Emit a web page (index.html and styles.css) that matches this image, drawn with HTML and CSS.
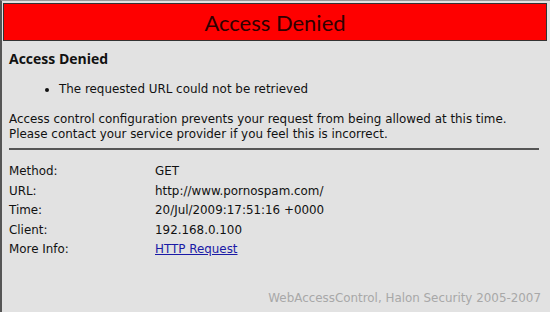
FILE: index.html
```html
<!DOCTYPE html>
<html>
<head>
<meta charset="utf-8">
<link rel="stylesheet" href="styles.css">
</head>
<body>
<div class="frame">
  <div class="banner">Access Denied</div>
  <div class="content">
    <h2 class="heading">Access Denied</h2>
    <ul class="reasons">
      <li>The requested URL could not be retrieved</li>
    </ul>
    <p class="message">Access control configuration prevents your request from being allowed at this time.<br>Please contact your service provider if you feel this is incorrect.</p>
    <hr class="rule">
    <div class="details">
      <span class="label">Method:</span><span class="value">GET</span>
      <span class="label">URL:</span><span class="value">http://www.pornospam.com/</span>
      <span class="label">Time:</span><span class="value">20/Jul/2009:17:51:16 +0000</span>
      <span class="label">Client:</span><span class="value">192.168.0.100</span>
      <span class="label">More Info:</span><span class="value"><a href="#" class="link">HTTP Request</a></span>
    </div>
    <div class="footer">WebAccessControl, Halon Security 2005-2007</div>
  </div>
</div>
</body>
</html>
```
FILE: styles.css
```css
html, body {
  margin: 0;
  padding: 0;
  background: #e2e2e2;
}
body {
  width: 550px;
  height: 312px;
  overflow: hidden;
  font-family: "DejaVu Sans", Verdana, sans-serif;
  font-size: 11.9px;
  color: #111;
}
.frame {
  box-sizing: border-box;
  height: 312px;
  border-left: 2px solid #555;
  border-top: 1px solid #999;
  padding: 2px 3px 0 1px;
}
.banner {
  background: #fe0000;
  border: 1px solid #333;
  height: 38px;
  box-sizing: border-box;
  display: flex;
  align-items: center;
  justify-content: center;
  font-family: Lato, sans-serif;
  font-size: 22px;
  color: #300000;
}
.content {
  padding: 0 6px 0 6px;
}
.heading {
  margin: 9px 0 0 0;
  font-family: "Open Sans", sans-serif;
  font-size: 14px;
  font-weight: bold;
  line-height: 18px;
}
.reasons {
  margin: 13px 0 0 0;
  padding-left: 50px;
  line-height: 16px;
}
.message {
  margin: 15px 0 0 0;
  line-height: 15px;
}
.rule {
  margin: 6px 2px 0 0;
  border: 0;
  height: 2px;
  background: #555;
}
.details {
  display: grid;
  grid-template-columns: 146px 1fr;
  row-gap: 3px;
  line-height: 16.6px;
  margin-top: 13px;
}
.link {
  color: #1a1aa6;
  text-decoration: underline;
}
.footer {
  margin-top: 32px;
  text-align: right;
  color: #a8a8a8;
  line-height: 16px;
}
```
